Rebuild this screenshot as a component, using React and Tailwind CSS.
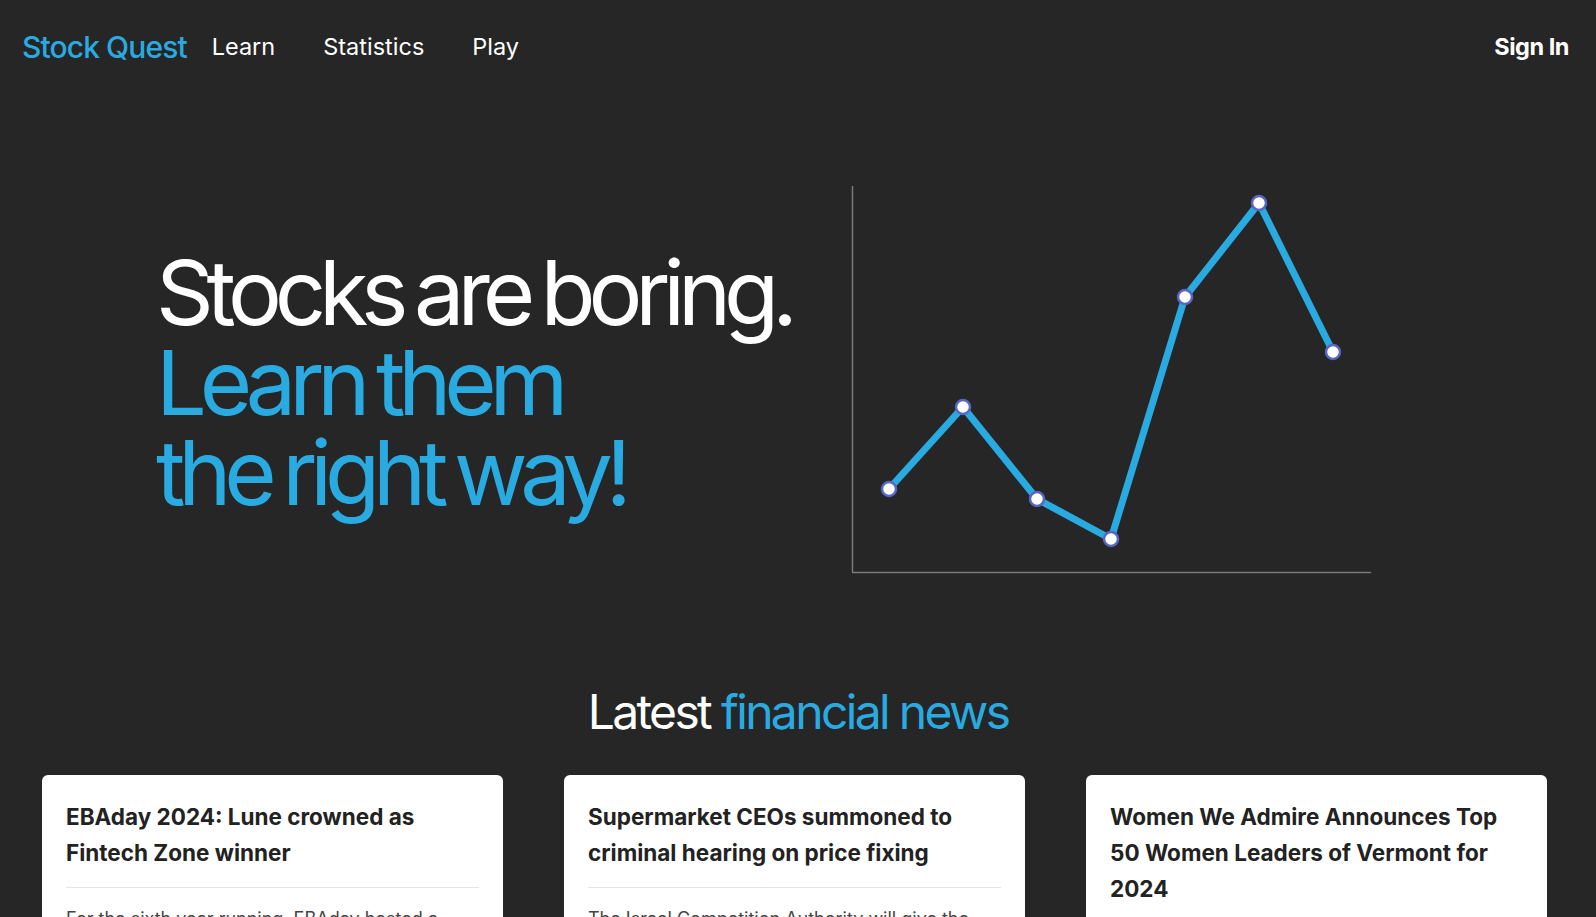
import React from 'react';

const points = [
    [38, 305],
    [112, 223],
    [186, 315],
    [260, 355],
    [334, 113],
    [408, 19],
    [482, 168],
];

const news = [
    {
        title: 'EBAday 2024: Lune crowned as Fintech Zone winner',
        body: 'For the sixth year running, EBAday hosted a Fintech Zone, showcasing the most innovative payments start-ups in Europe.',
    },
    {
        title: 'Supermarket CEOs summoned to criminal hearing on price fixing',
        body: 'The Israel Competition Authority will give the executives a chance to respond before deciding on indictments.',
    },
    {
        title: 'Women We Admire Announces Top 50 Women Leaders of Vermont for 2024',
        body: 'The list recognizes executives and founders shaping the economy of the state.',
    },
];

const Chart = () => (
    <svg width="522" height="390" viewBox="0 0 522 390" className="block">
        <line x1="1.5" y1="2" x2="1.5" y2="388" stroke="#7a7a7a" strokeWidth="1.5" />
        <line x1="1" y1="388.5" x2="520" y2="388.5" stroke="#7a7a7a" strokeWidth="1.5" />
        <polyline
            points={points.map((p) => p.join(',')).join(' ')}
            fill="none"
            stroke="#29abe2"
            strokeWidth="7"
            strokeLinejoin="round"
        />
        {points.map(([x, y]) => (
            <circle key={x} cx={x} cy={y} r="7" fill="#ffffff" stroke="#5965c4" strokeWidth="2.5" />
        ))}
    </svg>
);

const App = () => {
    return (
        <div className="min-h-screen w-full bg-[#262626] text-white overflow-hidden" style={{ fontFamily: 'Inter, "Noto Sans", sans-serif' }}>
            {/* Header */}
            <header className="flex h-[94px] items-center justify-between pl-[22px] pr-[27px]">
                <div className="flex items-center">
                    <span className="text-[30px] font-medium tracking-[-0.03em] text-[#29abe2]">Stock Quest</span>
                    <nav className="ml-[25px] flex items-center gap-[48px] text-[23.5px]">
                        <a href="#" className="text-white">Learn</a>
                        <a href="#" className="text-white">Statistics</a>
                        <a href="#" className="text-white">Play</a>
                    </nav>
                </div>
                <button className="text-[23.5px] font-bold tracking-[-0.02em] text-white">Sign In</button>
            </header>

            {/* Hero */}
            <section className="flex items-start pt-[90px] pl-[156px]">
                <div className="w-[695px] mt-[64px]">
                    <h1 className="text-[90px] leading-[90px] tracking-[-0.08em] [word-spacing:-0.06em] font-normal">
                        <span className="text-white">Stocks are boring.</span>
                        <br />
                        <span className="text-[#29abe2]">Learn them</span>
                        <br />
                        <span className="text-[#29abe2]">the right way!</span>
                    </h1>
                </div>
                <Chart />
            </section>

            {/* News */}
            <section className="mt-[114px]">
                <h2 className="text-center text-[48px] leading-[48px] tracking-[-0.055em]">
                    <span className="text-white">Latest </span>
                    <span className="text-[#29abe2]">financial news</span>
                </h2>
                <div className="mt-[39px] grid grid-cols-3 items-start gap-[61px] pl-[42px] pr-[49px]">
                    {news.map((item) => (
                        <div key={item.title} className="rounded-md bg-white px-6 pt-6 pb-6">
                            <h3 className="pb-4 text-[22.5px] font-bold leading-[36px] text-[#222222]">
                                {item.title}
                            </h3>
                            <div className="border-t border-[#e5e5e5] pt-4 text-[18px] leading-[30px] text-[#444444]">
                                {item.body}
                            </div>
                        </div>
                    ))}
                </div>
            </section>
        </div>
    );
};

export default App;
